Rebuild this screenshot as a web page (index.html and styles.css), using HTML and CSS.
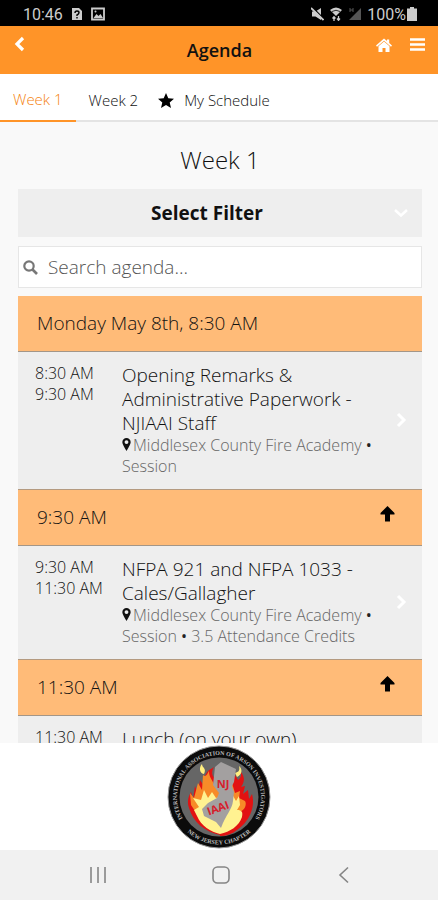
FILE: index.html
```html
<!DOCTYPE html>
<html lang="en">
<head>
    <meta charset="UTF-8">
    <meta name="viewport" content="width=device-width, initial-scale=1.0">
    <title>Agenda</title>
    <link rel="stylesheet" href="styles.css">
</head>
<body>
    <div class="status-bar">
        <span>10:46</span>
        <svg width="12" height="14" viewBox="0 0 12 14"><path d="M1 1h7l3 3v9H1z" fill="#ccc"/><path d="M4 6q0-2 2-2t2 1.700q0 1.300-2 2.300v1M6 10v1.500" fill="none" stroke="#000" stroke-width="1.400"/></svg>
        <svg width="14" height="14" viewBox="0 0 14 14"><path d="M1 1.500h12v11H1z" fill="none" stroke="#ccc" stroke-width="1.800"/><path d="M2.500 11l3-4 2 2 2-2 2.500 4z" fill="#ccc"/><circle cx="4.500" cy="4.500" r="1" fill="#ccc"/></svg>
        <div class="status-right">
            <svg width="13" height="14" viewBox="0 0 13 14"><path d="M1 4.500h3.500L10 1v12l-5.500-3.500H1z" fill="#ccc"/><path d="M1 0l12 12" stroke="#000" stroke-width="1.500"/><path d="M0 1l12.500 12" stroke="#ccc" stroke-width="1.800"/></svg>
            <svg width="14" height="14" viewBox="0 0 14 14"><path d="M1 3q6-5 12 0L7 9z" fill="#ccc"/><path d="M3 4.500q4-2.500 8 0" fill="none" stroke="#000" stroke-width=".8"/><path d="M5 14v-4M3.500 11.500L5 9.700l1.500 1.800M9.500 9v4M8 11.500l1.500 1.800 1.500-1.800" fill="none" stroke="#ccc" stroke-width="1.300"/></svg>
            <svg width="14" height="14" viewBox="0 0 14 14"><path d="M13 1v12H1z" fill="#555"/><path d="M2 1v4M5 1v4M2 3h3" stroke="#555"/></svg>
            <span>100%</span>
            <svg class="battery" width="10" height="14" viewBox="0 0 10 14"><path d="M3 0h4v1.500h3V14H0V1.500h3z" fill="#ccc"/></svg>
        </div>
    </div>

    <header class="header">
        <a href="#back" aria-label="Back"><svg width="12" height="16" viewBox="0 0 12 16"><path d="M9 2L3 8l6 6" fill="none" stroke="#fff" stroke-width="3.200"/></svg></a>
        <h1>Agenda</h1>
        <div class="header-actions">
            <a href="#home" aria-label="Home"><svg width="16" height="14" viewBox="0 0 16 14"><path d="M8 .5L11 3V1.500h2.200V5L16 7.500l-1 1.200-7-5.900-7 5.900-1-1.200z" fill="#fff"/><path d="M8 3.500l5.500 4.700V14H9.500v-4h-3v4h-4V8.200z" fill="#fff"/></svg></a>
            <button type="button" aria-label="Menu"><svg width="15" height="14" viewBox="0 0 15 14"><path d="M0 1.500h15M0 6.500h15M0 11.500h15" stroke="#fff" stroke-width="2.600"/></svg></button>
        </div>
    </header>

    <nav class="tabs">
        <a class="tab active" href="#week1">Week 1</a>
        <a class="tab" href="#week2">Week 2</a>
        <a class="tab" href="#my"><svg width="16" height="15" viewBox="0 0 16 15"><path d="M8 0l2.300 5.200 5.700.5-4.300 3.800 1.300 5.500-5-3-5 3 1.300-5.500L0 5.700l5.700-.5z" fill="#000"/></svg>My Schedule</a>
    </nav>

    <main class="content">
        <h2>Week 1</h2>
        <button class="filter" type="button" aria-expanded="false">
            <span>Select Filter</span>
            <svg width="14" height="10" viewBox="0 0 14 10"><path d="M1 2l6 5.500L13 2" fill="none" stroke="#fff" stroke-width="2.500"/></svg>
        </button>
        <div class="search">
            <svg width="15" height="15" viewBox="0 0 15 15"><circle cx="6" cy="6" r="4.700" fill="none" stroke="#777" stroke-width="2.200"/><path d="M9.500 9.500l4.500 4.500" stroke="#777" stroke-width="2.600"/></svg>
            <input type="text" placeholder="Search agenda..." aria-label="Search agenda">
        </div>

        <h3 class="group">Monday May 8th, 8:30 AM</h3>
        <a class="item" href="#opening">
            <div class="time">8:30 AM<br>9:30 AM</div>
            <div class="info">
                <h4>Opening Remarks &amp; Administrative Paperwork - NJIAAI Staff</h4>
                <p><svg class="pin" width="9" height="13" viewBox="0 0 9 14"><path fill-rule="evenodd" d="M4.500 0a4.500 4.500 0 0 1 4.500 4.500c0 2-2 5-4.500 9.500C2 9.500 0 6.500 0 4.500A4.500 4.500 0 0 1 4.500 0zm0 2.300a2 2 0 1 0 0 4.200 2 2 0 0 0 0-4.200z" fill="#111"/></svg>Middlesex County Fire Academy <b>•</b> Session</p>
            </div>
            <svg class="arrow" width="12" height="16" viewBox="0 0 12 16"><path d="M2 2l6 6-6 6" fill="none" stroke="#fff" stroke-width="3"/></svg>
        </a>
        <h3 class="group">9:30 AM
            <a href="#top" aria-label="Back to top"><svg width="15" height="16" viewBox="0 0 15 16"><path d="M7.500 0L14.500 7v1.500H10v7H5v-7H.5V7z" fill="#000"/></svg></a>
        </h3>
        <a class="item" href="#nfpa">
            <div class="time">9:30 AM<br>11:30 AM</div>
            <div class="info">
                <h4>NFPA 921 and NFPA 1033 - Cales/Gallagher</h4>
                <p><svg class="pin" width="9" height="13" viewBox="0 0 9 14"><path fill-rule="evenodd" d="M4.500 0a4.500 4.500 0 0 1 4.500 4.500c0 2-2 5-4.500 9.500C2 9.500 0 6.500 0 4.500A4.500 4.500 0 0 1 4.500 0zm0 2.300a2 2 0 1 0 0 4.200 2 2 0 0 0 0-4.200z" fill="#111"/></svg>Middlesex County Fire Academy <b>•</b> Session <b>•</b> 3.5 Attendance Credits</p>
            </div>
            <svg class="arrow" width="12" height="16" viewBox="0 0 12 16"><path d="M2 2l6 6-6 6" fill="none" stroke="#fff" stroke-width="3"/></svg>
        </a>
        <h3 class="group">11:30 AM
            <a href="#top" aria-label="Back to top"><svg width="15" height="16" viewBox="0 0 15 16"><path d="M7.500 0L14.500 7v1.500H10v7H5v-7H.5V7z" fill="#000"/></svg></a>
        </h3>
        <a class="item" href="#lunch">
            <div class="time">11:30 AM</div>
            <div class="info"><h4>Lunch (on your own)</h4></div>
        </a>
    </main>

    <footer class="sponsor">
        <svg width="104" height="104" viewBox="0 0 104 104">
            <defs>
                <path id="ringTop" d="M19.800 79A42 42 0 1 1 84.200 79"/>
                <path id="ringBottom" d="M14 80A47 47 0 0 0 90 80"/>
            </defs>
            <circle cx="52" cy="52" r="51" fill="#0b0b0b" stroke="#999"/>
            <circle cx="52" cy="52" r="39.500" fill="#666"/>
            <!-- flames -->
            <path d="M53 90C38 87 26 77 22 63c-2-6-1-11 2-16l2 7 2-13 3 8 2-14 4 6c0-5-1-8 2-12 2-4 5-5 8-7-3 5-2 9 1 11l14 6 6-9 3 5c3-2 4-5 2-9 5 5 5 11 1 16l4-1-2 8 5-4 1 9 3-5c4 14-4 29-15 36-5 4-11 6-17 6z" fill="#e21212"/>
            <path d="M24 60l-1-12 4 5 4-15 4 7 1-15c3 3 4-1 6-4 0 7 4 9 5 14l18-2 3 10 5-2-1 7 6 3c2 3 0 9-5 11L53 87 30 69z" fill="#f78b28"/>
            <path d="M53 89C44 87 34 81 30 71l-3-6 5-3-6-9 8 2 3-10 4 8 4-6 4 6 16-4 4 7 3-5 1 9-3 5c5 0 6 2 5 7-3 9-12 15-22 17z" fill="#fff291"/>
            <path d="M37 29c-5-1-5-7-2-10 0 4 5 4 2 10zM68 28c4-1 5-3 4-7 4 3 3 9-2 11z" fill="#ffef80"/>
            <!-- state outline -->
            <path d="M48 22l6-5 15 7-2 13-2 4 2 6-1 9c-1 9-7 13-12 27l-5-6-12-6-2-7 6-6 9-5 2-5-6-8z" fill="#a3a0a0"/>
            <text class="seal-red" x="56" y="43" text-anchor="middle">NJ</text>
            <text class="seal-red" x="51" y="67" text-anchor="middle" transform="rotate(-20 51 63)">IAAI</text>
            <text class="seal-text"><textPath href="#ringTop" startOffset="50%" text-anchor="middle">INTERNATIONAL ASSOCIATION OF ARSON INVESTIGATORS</textPath></text>
            <text class="seal-text"><textPath href="#ringBottom" startOffset="50%" text-anchor="middle">NEW JERSEY CHAPTER</textPath></text>
        </svg>
    </footer>

    <div class="system-nav">
        <button type="button" aria-label="Recent apps"><svg width="18" height="18" viewBox="0 0 18 18"><path d="M2 1v16M9 1v16M16 1v16" stroke="#858585" stroke-width="1.600"/></svg></button>
        <button type="button" aria-label="Home screen"><svg width="18" height="18" viewBox="0 0 18 18"><rect x="1" y="1" width="16" height="16" rx="4.500" fill="none" stroke="#858585" stroke-width="1.600"/></svg></button>
        <button type="button" aria-label="Go back"><svg width="18" height="18" viewBox="0 0 18 18"><path d="M13 1.500L5 9l8 7.500" fill="none" stroke="#858585" stroke-width="1.600"/></svg></button>
    </div>
</body>
</html>
```

FILE: styles.css
```css
* {
    box-sizing: border-box;
}
body {
    font-family: "Open Sans", sans-serif;
    font-weight: 300;
    margin: 0;
    height: 100vh;
    display: flex;
    flex-direction: column;
    background-color: #f9f9f9;
    color: #111;
}
h1, h2, h3, h4, p {
    margin: 0;
    font-weight: 300;
}
a {
    color: inherit;
    text-decoration: none;
}
button {
    background: none;
    border: none;
    padding: 0;
    font-family: inherit;
    cursor: pointer;
}
svg {
    display: block;
    flex: none;
}
.status-bar {
    display: flex;
    align-items: center;
    gap: 8px;
    flex: none;
    height: 26px;
    padding: 2px 21px 0 23px;
    background-color: #000;
    color: #ccc;
    font-family: Roboto, sans-serif;
    font-size: 16px;
    font-weight: 400;
}
.status-right {
    display: flex;
    align-items: center;
    gap: 5px;
    margin-left: auto;
}
.battery {
    margin-left: -4px;
}
.header {
    display: grid;
    grid-template-columns: 1fr auto 1fr;
    flex: none;
    height: 48px;
    padding: 0 13px 0 14px;
    background-color: #ff9428;
}
.header > a {
    padding-top: 10px;
}
.header h1 {
    font-size: 18px;
    font-weight: 600;
    line-height: 48px;
    color: #111;
}
.header-actions {
    display: flex;
    justify-content: flex-end;
    align-items: flex-start;
    gap: 18px;
    padding-top: 12px;
}
.tabs {
    display: flex;
    flex: none;
    height: 48px;
    background-color: #fff;
    border-bottom: 2px solid #e4e4e4;
    font-size: 15px;
}
.tab {
    display: flex;
    align-items: center;
    gap: 10px;
    height: 48px;
    padding: 4px 7px 0 13px;
}
.tab.active {
    padding: 4px 13px 0;
    border-bottom: 2px solid #ff9428;
    color: #f5820f;
}
.content {
    flex: 1;
    min-height: 0;
    overflow: hidden;
    padding: 22px 16px 0 18px;
}
.content h2 {
    font-size: 24px;
    line-height: 32px;
    text-align: center;
}
.filter {
    display: flex;
    align-items: center;
    gap: 12px;
    width: 100%;
    height: 48px;
    margin-top: 13px;
    padding: 0 14px;
    background-color: #eee;
    color: #111;
    font-size: 19px;
    font-weight: 700;
}
.filter span {
    flex: 1;
}
.search {
    display: flex;
    align-items: center;
    gap: 10px;
    height: 42px;
    margin: 9px 0 8px;
    padding: 0 4px;
    background-color: #fff;
    border: 1px solid #e6e6e6;
}
.search input {
    flex: 1;
    min-width: 0;
    padding: 0;
    border: none;
    outline: none;
    background: none;
    font-family: inherit;
    font-size: 19px;
    font-weight: 300;
}
.search input::placeholder {
    color: #555;
}
.group {
    display: flex;
    justify-content: space-between;
    padding: 0 27px 0 19px;
    background-color: #ffbb78;
    border-top: 1px solid #b49a80;
    border-bottom: 1px solid #a39688;
    font-size: 19px;
    line-height: 55px;
}
.search + .group {
    border-top: none;
}
.group a {
    padding-top: 16px;
}
.item {
    display: flex;
    padding: 11px 14px 12px 17px;
    background-color: #eee;
}
.time {
    flex: none;
    width: 87px;
    font-size: 16px;
    line-height: 21px;
}
.info {
    flex: 1;
    padding-right: 14px;
}
.info h4 {
    font-size: 19px;
    line-height: 24px;
}
.info p {
    font-size: 16px;
    line-height: 21px;
    color: #666;
}
.info b {
    color: #222;
}
.pin {
    display: inline-block;
    margin-right: 2px;
}
.arrow {
    align-self: center;
}
.sponsor {
    display: flex;
    justify-content: center;
    align-items: center;
    flex: none;
    height: 107px;
    background-color: #fff;
}
.seal-text {
    fill: #bbb;
    font-family: "Liberation Serif", serif;
    font-size: 6px;
    font-weight: 700;
}
.seal-red {
    fill: #d5202c;
    font-family: "Open Sans", sans-serif;
    font-size: 11px;
    font-weight: 700;
}
.system-nav {
    display: flex;
    justify-content: space-between;
    align-items: center;
    flex: none;
    height: 50px;
    padding: 0 85px 0 89px;
    background-color: #f1f1f1;
}
```
